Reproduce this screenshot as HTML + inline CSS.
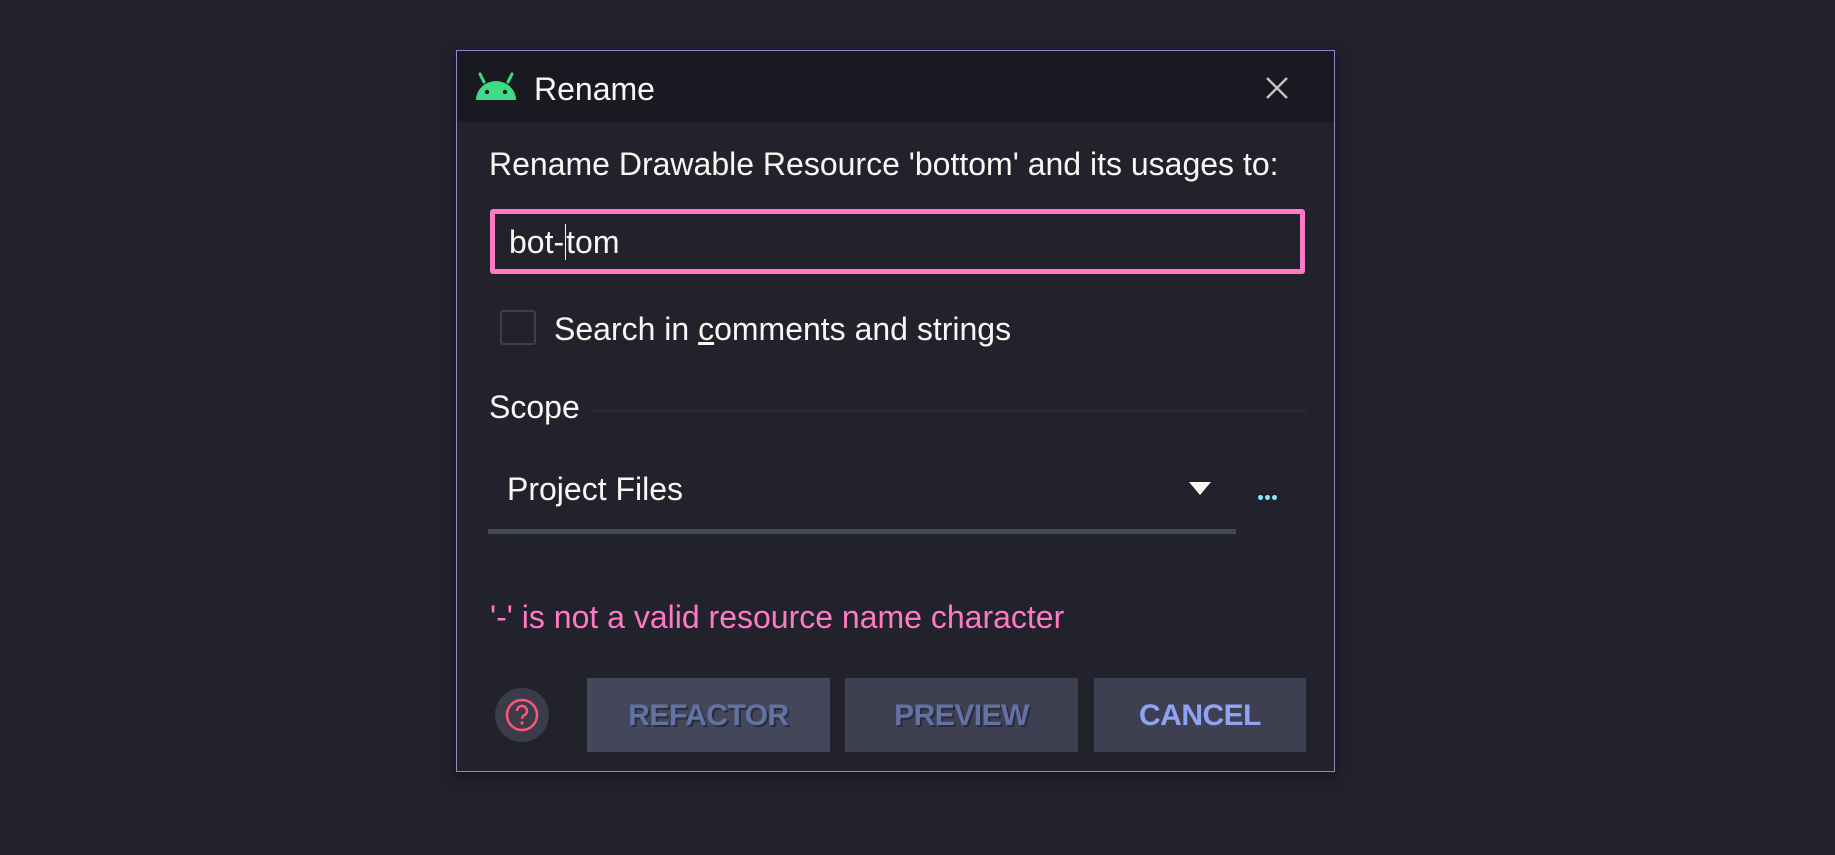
<!DOCTYPE html>
<html><head><meta charset="utf-8"><style>
html,body{margin:0;padding:0;width:1835px;height:855px;background:#21222c;overflow:hidden;font-family:"Liberation Sans",sans-serif;}
.a{position:absolute;white-space:nowrap;}
.t{color:#f8f8f2;font-size:32px;line-height:40px;}
</style></head><body>
<div class="a" style="left:456px;top:50px;width:877px;height:720px;border:1px solid #9d7fcf;background:#21222c;box-shadow:0 4px 14px rgba(0,0,0,.4);"></div>
<div class="a" style="left:457px;top:51px;width:877px;height:71px;background:#191a21;"></div>
<svg class="a" style="left:474px;top:72px" width="44" height="30" viewBox="0 0 44 30">
<path d="M2 28 A20 19 0 0 1 42 28 Z" fill="#3ddc84"/>
<line x1="10" y1="10" x2="6" y2="2" stroke="#3ddc84" stroke-width="3" stroke-linecap="round"/>
<line x1="34" y1="10" x2="38" y2="2" stroke="#3ddc84" stroke-width="3" stroke-linecap="round"/>
<circle cx="13" cy="20" r="2.2" fill="#191a21"/><circle cx="31" cy="20" r="2.2" fill="#191a21"/>
</svg>
<div class="a t" style="left:534px;top:69px;">Rename</div>
<svg class="a" style="left:1265px;top:76px" width="24" height="24"><path d="M2 2L22 22M22 2L2 22" stroke="#bfbfc4" stroke-width="2.5"/></svg>
<div class="a t" style="left:489px;top:144px;">Rename Drawable Resource 'bottom' and its usages to:</div>
<div class="a" style="left:490px;top:209px;width:805px;height:55px;border:5px solid #ff79c6;border-radius:3px;"></div>
<div class="a t" style="left:509px;top:222px;">bot-<span style="border-left:1px solid #f8f8f2;margin-left:1px;"></span>tom</div>
<div class="a" style="left:500px;top:310px;width:32px;height:31px;border:2px solid #3c3e4c;border-radius:3px;"></div>
<div class="a t" style="left:554px;top:309px;">Search in <u>c</u>omments and strings</div>
<div class="a t" style="left:489px;top:387px;">Scope</div>
<div class="a" style="left:591px;top:409px;width:715px;height:3px;background:#282a36;"></div>
<div class="a t" style="left:507px;top:469px;">Project Files</div>
<svg class="a" style="left:1189px;top:482px" width="22" height="14"><path d="M0 0H22L11 13Z" fill="#f8f8f2"/></svg>
<div class="a" style="left:1258px;top:495px;width:5px;height:5px;border-radius:3px;background:#8be9fd;box-shadow:7px 0 #8be9fd,14px 0 #8be9fd;"></div>
<div class="a" style="left:488px;top:529px;width:748px;height:5px;background:#44475a;"></div>
<div class="a t" style="left:490px;top:597px;color:#ff79c6;">'-' is not a valid resource name character</div>
<div class="a" style="left:495px;top:688px;width:54px;height:54px;border-radius:27px;background:#3a3c4a;"></div>
<svg class="a" style="left:504px;top:697px" width="36" height="36"><circle cx="18" cy="18" r="15" fill="none" stroke="#ff5577" stroke-width="2.5"/><path d="M13 14a5 5 0 1 1 7 4.5c-1.5.8-2 1.5-2 3.5" fill="none" stroke="#ff5577" stroke-width="2.5"/><circle cx="18" cy="26" r="1.6" fill="#ff5577"/></svg>
<div class="a" style="left:587px;top:678px;width:243px;height:74px;background:#44475a;color:#6272a4;font-weight:bold;font-size:30px;text-align:center;line-height:76px;text-shadow:2px 2px 0 #2a2c3a;letter-spacing:-0.5px;">REFACTOR</div>
<div class="a" style="left:845px;top:678px;width:233px;height:74px;background:#3e4052;color:#6272a4;font-weight:bold;font-size:30px;text-align:center;line-height:76px;text-shadow:2px 2px 0 #2a2c3a;letter-spacing:-0.5px;">PREVIEW</div>
<div class="a" style="left:1094px;top:678px;width:212px;height:74px;background:#3e4052;color:#8ea3f2;font-weight:bold;font-size:30px;text-align:center;line-height:76px;letter-spacing:-0.5px;">CANCEL</div>
</body></html>
